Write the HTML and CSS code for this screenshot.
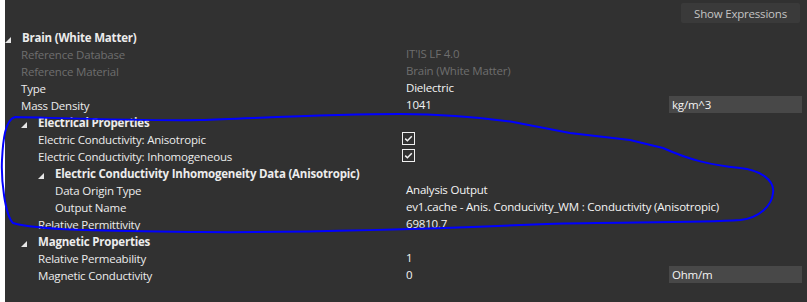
FILE: index.html
```html
<!DOCTYPE html>
<html>
	<head>
		<meta charset="UTF-8">
		<title>Material Properties</title>
		<link rel="stylesheet" href="styles.css">
	</head>
	<body>
		<div class="edge"></div>
		<div class="panel">
			<div class="toolbar"><button class="btn">Show Expressions</button></div>

			<div class="row head">
				<div class="label h0"><span class="caret"></span>Brain (White Matter)</div>
			</div>
			<div class="row dim">
				<div class="label d0">Reference Database</div>
				<div class="value">IT'IS LF 4.0</div>
			</div>
			<div class="row dim">
				<div class="label d0">Reference Material</div>
				<div class="value">Brain (White Matter)</div>
			</div>
			<div class="row">
				<div class="label d0">Type</div>
				<div class="value">Dielectric</div>
			</div>
			<div class="row">
				<div class="label d0">Mass Density</div>
				<div class="value">1041</div>
				<div class="unit">kg/m^3</div>
			</div>

			<div class="row head">
				<div class="label h1"><span class="caret"></span>Electrical Properties</div>
			</div>
			<div class="row">
				<div class="label d1">Electric Conductivity: Anisotropic</div>
				<div class="value"><span class="check"><svg width="11" height="11" viewBox="0 0 11 11"><path d="M2.2 5.6 L4.4 7.8 L8.8 3.2" fill="none" stroke="#f2f2f2" stroke-width="1.5"/></svg></span></div>
			</div>
			<div class="row">
				<div class="label d1">Electric Conductivity: Inhomogeneous</div>
				<div class="value"><span class="check"><svg width="11" height="11" viewBox="0 0 11 11"><path d="M2.2 5.6 L4.4 7.8 L8.8 3.2" fill="none" stroke="#f2f2f2" stroke-width="1.5"/></svg></span></div>
			</div>
			<div class="row head">
				<div class="label h2"><span class="caret"></span>Electric Conductivity Inhomogeneity Data (Anisotropic)</div>
			</div>
			<div class="row">
				<div class="label d2">Data Origin Type</div>
				<div class="value">Analysis Output</div>
			</div>
			<div class="row">
				<div class="label d2">Output Name</div>
				<div class="value wide">ev1.cache - Anis. Conducivity_WM : Conductivity (Anisotropic)</div>
			</div>
			<div class="row">
				<div class="label d1">Relative Permittivity</div>
				<div class="value">69810.7</div>
			</div>

			<div class="row head">
				<div class="label h1"><span class="caret"></span>Magnetic Properties</div>
			</div>
			<div class="row">
				<div class="label d1">Relative Permeability</div>
				<div class="value">1</div>
			</div>
			<div class="row">
				<div class="label d1">Magnetic Conductivity</div>
				<div class="value">0</div>
				<div class="unit">Ohm/m</div>
			</div>
		</div>

		<!-- hand drawn marker round the electrical block -->
		<svg class="mark" width="807" height="302" viewBox="0 0 807 302">
			<path d="M15 117 C60 118 150 121 200 120 C260 118 330 114 400 114 C450 114 485 118 513 122 L570 133 L630 140 L663 148 C690 160 710 165 740 168 C760 170 775 180 773 193 C772 205 760 218 740 220 C700 223 620 222 547 224 C450 228 300 233 200 232 C120 231 40 231 13 223 C5 215 1 180 2 160 C3 140 5 120 15 117" fill="none" stroke="#0000ff" stroke-width="2"/>
		</svg>
	</body>
</html>
```

FILE: styles.css
```css
*{
    margin: 0;
    padding: 0;
    box-sizing: border-box;
}
body{
    width: 807px;
    height: 302px;
    display: flex;
    background: #313131;
    font-family: "Open Sans", "Noto Sans", sans-serif;
    font-size: 11.5px;
    letter-spacing: -0.2px;
    color: #ececec;
    overflow: hidden;
    position: relative;
}
.edge{
    width: 5px;
    background: #ffffff;
}
.panel{
    flex: 1;
}
.toolbar{
    height: 28px;
    display: flex;
    justify-content: flex-end;
    padding: 3px 7px 0 0;
}
.btn{
    width: 119px;
    height: 20px;
    border: none;
    border-radius: 2px;
    background: #3a3a3a;
    color: #c4c4c4;
    font-family: inherit;
    font-size: 11.5px;
    letter-spacing: -0.2px;
}
.row{
    height: 17px;
    display: grid;
    grid-template-columns: 401px 263px 133px;
    align-items: center;
    white-space: nowrap;
}
.head .label{
    font-weight: bold;
}
.label{
    display: flex;
    align-items: center;
    height: 17px;
    padding-top: 1px;
}
.d0{ padding-left: 16px; }
.d1{ padding-left: 33px; }
.d2{ padding-left: 50px; }
.h0{ padding-left: 0; }
.h1{ padding-left: 16px; }
.h2{ padding-left: 33px; }
.caret{
    width: 17px;
    height: 16px;
    position: relative;
    flex: none;
}
.caret::after{
    content: "";
    position: absolute;
    left: 0;
    top: 8px;
    border-style: solid;
    border-width: 0 0 6px 6px;
    border-color: transparent transparent #e6e6e6 transparent;
}
.value{
    color: #f4f4f4;
    height: 17px;
    line-height: 18px;
}
.dim .label,
.dim .value{
    color: #6e6e6e;
}
.check{
    display: inline-block;
    width: 13px;
    height: 13px;
    margin: 2px 0 0 -4px;
    border: 1px solid #f0f0f0;
    vertical-align: top;
}
.check svg{
    display: block;
}
.unit{
    height: 17px;
    line-height: 18px;
    background: #484848;
    padding-left: 3px;
    color: #f4f4f4;
}
.mark{
    position: absolute;
    left: 0;
    top: 0;
    pointer-events: none;
}
```
